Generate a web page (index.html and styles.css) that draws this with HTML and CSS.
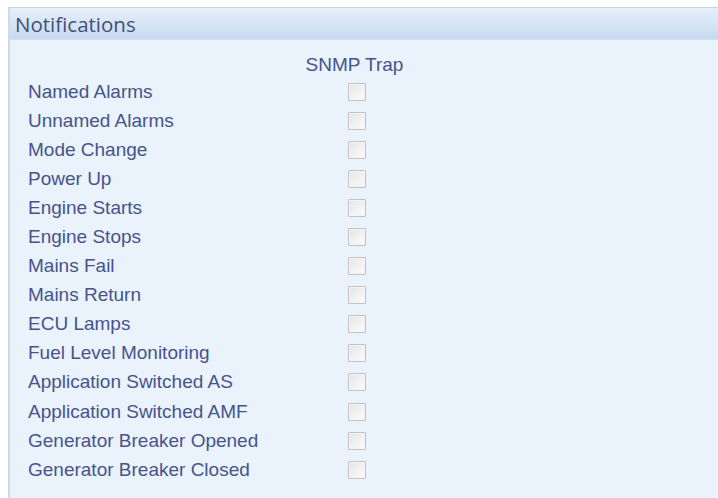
FILE: index.html
```html
<!DOCTYPE html>
<html>
<head>
<meta charset="utf-8">
<link rel="stylesheet" href="styles.css">
</head>
<body>
<section class="panel">
  <header class="panel-title">Notifications</header>
  <div class="grid">
    <div class="label"></div><div class="col-head">SNMP Trap</div>
    <div class="label">Named Alarms</div><div class="cell"><span class="check"></span></div>
    <div class="label">Unnamed Alarms</div><div class="cell"><span class="check"></span></div>
    <div class="label">Mode Change</div><div class="cell"><span class="check"></span></div>
    <div class="label">Power Up</div><div class="cell"><span class="check"></span></div>
    <div class="label">Engine Starts</div><div class="cell"><span class="check"></span></div>
    <div class="label">Engine Stops</div><div class="cell"><span class="check"></span></div>
    <div class="label">Mains Fail</div><div class="cell"><span class="check"></span></div>
    <div class="label">Mains Return</div><div class="cell"><span class="check"></span></div>
    <div class="label">ECU Lamps</div><div class="cell"><span class="check"></span></div>
    <div class="label">Fuel Level Monitoring</div><div class="cell"><span class="check"></span></div>
    <div class="label">Application Switched AS</div><div class="cell"><span class="check"></span></div>
    <div class="label">Application Switched AMF</div><div class="cell"><span class="check"></span></div>
    <div class="label">Generator Breaker Opened</div><div class="cell"><span class="check"></span></div>
    <div class="label">Generator Breaker Closed</div><div class="cell"><span class="check"></span></div>
  </div>
</section>
</body>
</html>
```
FILE: styles.css
```css
html, body {
  margin: 0;
  padding: 0;
  background: #ffffff;
  overflow: hidden;
}

body {
  padding: 7px 0 0 8px;
  height: 498px;
  box-sizing: border-box;
}

.panel {
  height: 100%;
  background: #eaf2fc;
  border-top: 1px solid #c3d4e2;
  border-left: 2px solid #cbdbea;
  box-sizing: border-box;
}

.panel-title {
  height: 32px;
  box-sizing: border-box;
  padding: 2px 0 0 5px;
  font-family: "Open Sans", "DejaVu Sans", sans-serif;
  font-size: 20.5px;
  line-height: 28px;
  color: #3f5178;
  background: linear-gradient(to bottom, #e6eefa 0%, #dae6f5 45%, #c6d9ef 100%);
  border-bottom: 1px solid #d3e1f0;
}

.grid {
  display: grid;
  grid-template-columns: 278px 100px;
  grid-auto-rows: 29.1px;
  grid-template-rows: 24px;
  padding: 13px 0 0 18px;
  font-family: "Liberation Sans", Arial, sans-serif;
  font-size: 19px;
  color: #47548a;
}

.label {
  display: flex;
  align-items: center;
  white-space: nowrap;
}

.col-head {
  display: flex;
  align-items: center;
  justify-content: center;
  white-space: nowrap;
  padding-right: 3px;
}

.cell {
  display: flex;
  align-items: center;
  justify-content: center;
  padding-left: 2px;
}

.check {
  width: 18px;
  height: 18px;
  box-sizing: border-box;
  border: 1px solid #c2c2c2;
  border-radius: 1px;
  background: linear-gradient(135deg, #e4e4e4 0%, #f2f2f2 55%, #fbfbfb 100%);
  box-shadow: inset 0 0 0 1px #f4f4f4;
}
```
